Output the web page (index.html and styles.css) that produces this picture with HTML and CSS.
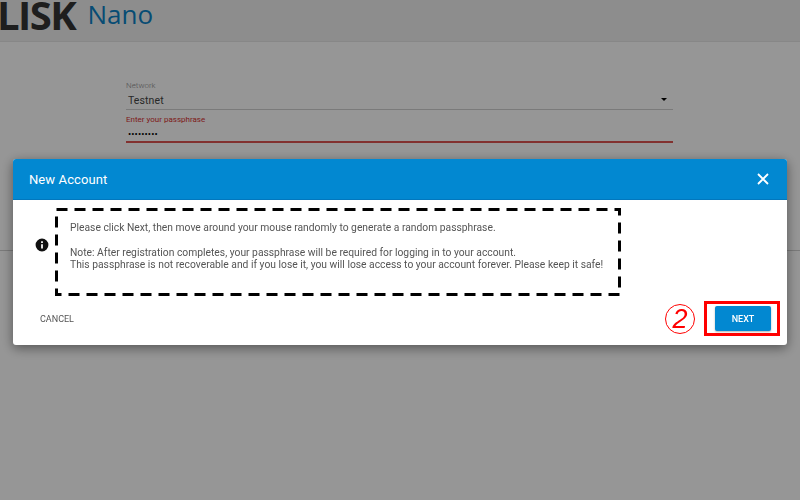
FILE: index.html
```html
<!DOCTYPE html>
<html lang="en">
<head>
    <meta charset="UTF-8">
    <title>Lisk Nano</title>
    <link rel="stylesheet" href="styles.css">
</head>
<body>
    <header class="top-bar">
        <span class="logo">LISK</span>
        <span class="logo-sub">Nano</span>
    </header>

    <main class="login-area">
        <form class="login-form">
            <label class="field-label">Network</label>
            <div class="select-field">
                <span>Testnet</span>
                <span class="caret"></span>
            </div>
            <label class="field-label error">Enter your passphrase</label>
            <div class="pass-field">•••••••••</div>
        </form>
    </main>
    <div class="page-line"></div>

    <div class="overlay">
        <div class="dialog">
            <div class="dialog-head">
                <h1>New Account</h1>
                <svg class="close-icon" viewBox="0 0 12 12" width="12" height="12">
                    <path d="M1 1L11 11M11 1L1 11" stroke="#fff" stroke-width="1.800" fill="none"/>
                </svg>
            </div>
            <div class="dialog-body">
                <svg class="info-icon" viewBox="0 0 24 24" width="14" height="14">
                    <path fill="#111" d="M12 1a11 11 0 1 0 0 22a11 11 0 0 0 0-22zm1.500 17h-3v-7.500h3zm0-9.500h-3v-3h3z"/>
                </svg>
                <div class="note">
                    <svg class="dash-box" width="566" height="88">
                        <rect x="1.500" y="1.500" width="563" height="85" fill="none" stroke="#000" stroke-width="3" stroke-dasharray="11 7"/>
                    </svg>
                    <p>Please click Next, then move around your mouse randomly to generate a random passphrase.</p>
                    <p>Note: After registration completes, your passphrase will be required for logging in to your account.<br>This passphrase is not recoverable and if you lose it, you will lose access to your account forever. Please keep it safe!</p>
                </div>
            </div>
            <div class="dialog-actions">
                <button class="btn-cancel">CANCEL</button>
                <div class="next-wrap">
                    <span class="step-num">2</span>
                    <div class="red-box">
                        <button class="btn-next">NEXT</button>
                    </div>
                </div>
            </div>
        </div>
    </div>
</body>
</html>
```

FILE: styles.css
```css
* {
    box-sizing: border-box;
}
body {
    margin: 0;
    height: 500px;
    overflow: hidden;
    background-color: #fafafa;
    font-family: Roboto, sans-serif;
    color: #555;
}
.top-bar {
    display: flex;
    align-items: flex-end;
    height: 42px;
    padding-bottom: 12px;
    background-color: #ececec;
    border-bottom: 1px solid #e2e2e2;
    overflow: hidden;
}
.logo {
    margin-left: -3px;
    font-family: "Open Sans", sans-serif;
    font-weight: 700;
    font-size: 40px;
    line-height: 29px;
    letter-spacing: -1.500px;
    color: #333;
}
.logo-sub {
    margin-left: 12px;
    font-family: "Open Sans", sans-serif;
    font-size: 26px;
    line-height: 29px;
    color: #0d7fc2;
}
.login-area {
    height: 208px;
    padding-top: 38px;
    padding-left: 126px;
}
.login-form {
    width: 547px;
}
.field-label {
    display: block;
    font-size: 8px;
    font-weight: 300;
    line-height: 11px;
    color: #888;
}
.field-label.error {
    margin-top: 4px;
    font-weight: 400;
    color: #d32f2f;
}
.select-field {
    display: flex;
    justify-content: space-between;
    align-items: center;
    height: 19px;
    padding: 1px 6px 0 2px;
    font-size: 10.500px;
    letter-spacing: 0.100px;
    color: #444;
    border-bottom: 1px solid #ccc;
}
.caret {
    width: 0;
    height: 0;
    margin-top: -2px;
    border-left: 3px solid transparent;
    border-right: 3px solid transparent;
    border-top: 3px solid #000;
}
.pass-field {
    height: 18px;
    padding: 3px 0 0 2px;
    font-size: 9.500px;
    line-height: 11px;
    letter-spacing: 0.100px;
    color: #000;
    border-bottom: 2px solid #d9534f;
}
.page-line {
    height: 1px;
    background-color: #ccc;
}
.overlay {
    position: fixed;
    top: 0;
    left: 0;
    width: 800px;
    height: 500px;
    padding: 159px 13px 0;
    background-color: rgba(0, 0, 0, 0.4);
}
.dialog {
    height: 186px;
    background-color: #fff;
    border-radius: 3px;
    box-shadow: 0 3px 12px rgba(0, 0, 0, 0.45);
}
.dialog-head {
    display: flex;
    justify-content: space-between;
    align-items: center;
    height: 41px;
    padding: 0 18px 0 16px;
    background-color: #0288d1;
    border-radius: 3px 3px 0 0;
    border-bottom: 1px solid #0277bd;
}
.dialog-head h1 {
    margin: 0;
    font-size: 13px;
    font-weight: 400;
    letter-spacing: 0.100px;
    color: #fff;
}
.dialog-body {
    display: flex;
    align-items: flex-start;
    height: 88px;
    margin-top: 8px;
    padding-left: 22px;
}
.info-icon {
    flex: none;
    margin-right: 6px;
    margin-top: 30px;
}
.note {
    position: relative;
    width: 566px;
    height: 88px;
    padding: 14px 15px;
    font-size: 10.300px;
    line-height: 12px;
    color: #555;
}
.note p {
    margin: 0 0 13px;
    white-space: nowrap;
}
.dash-box {
    position: absolute;
    top: 0;
    left: 0;
}
.dialog-actions {
    display: flex;
    justify-content: space-between;
    align-items: center;
    height: 35px;
    margin-top: 5px;
    padding: 0 7px 0 27px;
}
.btn-cancel {
    padding: 0;
    border: none;
    background: none;
    font-family: Roboto, sans-serif;
    font-size: 9px;
    color: #555;
}
.next-wrap {
    display: flex;
    align-items: center;
    gap: 9px;
}
.step-num {
    display: flex;
    justify-content: center;
    align-items: center;
    width: 30px;
    height: 30px;
    border: 1px solid #f00;
    border-radius: 50%;
    font-family: "Liberation Sans", sans-serif;
    font-size: 27px;
    font-style: italic;
    line-height: 28px;
    color: #f00;
}
.red-box {
    width: 76px;
    height: 35px;
    padding: 2px 8px;
    border: 3px solid #f00;
}
.btn-next {
    display: block;
    width: 56px;
    height: 25px;
    padding: 0;
    border: none;
    border-radius: 2px;
    background-color: #0288d1;
    font-family: Roboto, sans-serif;
    font-size: 9px;
    font-weight: 500;
    color: #fff;
    box-shadow: 0 1px 2px rgba(0, 0, 0, 0.3);
}
```
